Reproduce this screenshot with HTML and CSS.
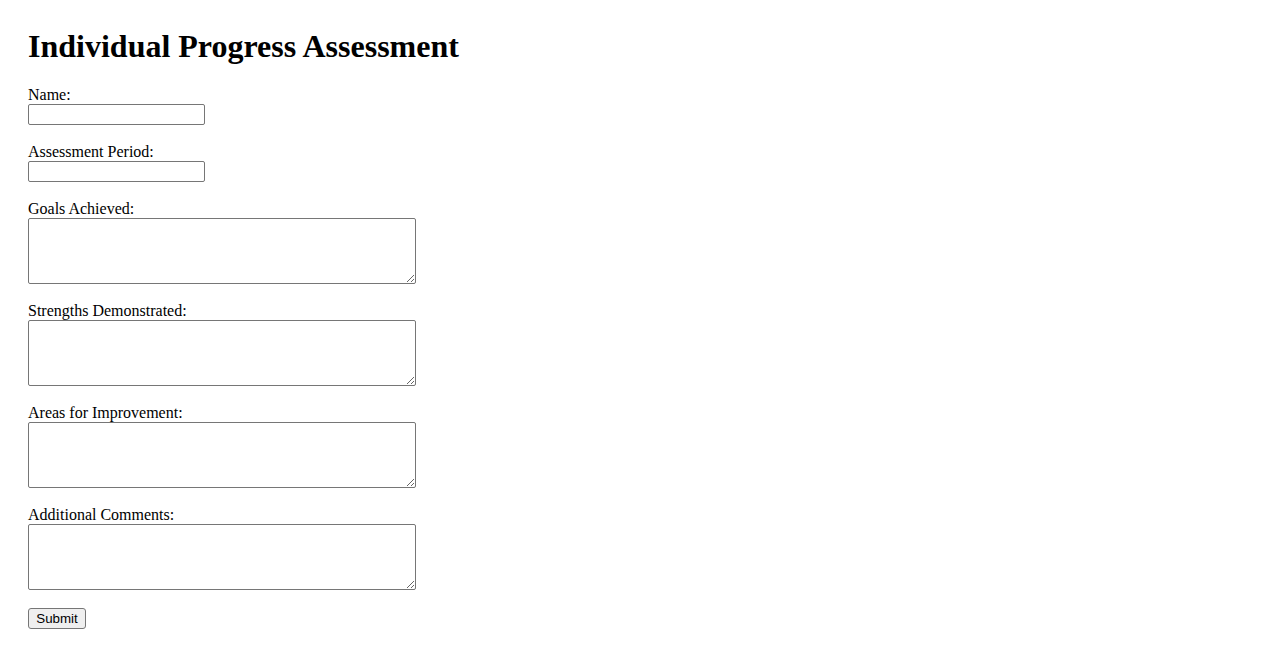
FILE: index.html
```html
<!DOCTYPE html>
<html lang="en">
<head>
<meta charset="utf-8">
<title>Individual Progress Assessment</title>
<link rel="stylesheet" href="styles.css">
</head>
<body>
<div class="page">
  <h1 class="title">Individual Progress Assessment</h1>
  <form class="form">
    <div class="group">
      <label class="label" for="name">Name:</label>
      <input class="field" type="text" id="name">
    </div>
    <div class="group">
      <label class="label" for="period">Assessment Period:</label>
      <input class="field" type="text" id="period">
    </div>
    <div class="group">
      <label class="label" for="goals">Goals Achieved:</label>
      <textarea class="area" id="goals" rows="4"></textarea>
    </div>
    <div class="group">
      <label class="label" for="strengths">Strengths Demonstrated:</label>
      <textarea class="area" id="strengths" rows="4"></textarea>
    </div>
    <div class="group">
      <label class="label" for="improve">Areas for Improvement:</label>
      <textarea class="area" id="improve" rows="4"></textarea>
    </div>
    <div class="group">
      <label class="label" for="comments">Additional Comments:</label>
      <textarea class="area" id="comments" rows="4"></textarea>
    </div>
    <button class="submit" type="submit">Submit</button>
  </form>
</div>
</body>
</html>
```

FILE: styles.css
```css
html, body {
  background: #ffffff;
}
body {
  margin: 8px;
  font-family: "Liberation Serif", "Times New Roman", serif;
  font-size: 16px;
  color: #000000;
}
.page {
  padding: 20px;
}
.title {
  margin: 0 0 21.44px 0;
  font-size: 32px;
  font-weight: bold;
  line-height: normal;
}
.form {
  margin: 0;
}
.group {
  margin-bottom: 18px;
}
.label {
  display: block;
  height: 18px;
  line-height: 18px;
}
.field {
  display: block;
  box-sizing: border-box;
  width: 177px;
  height: 21px;
  margin: 0;
  padding: 1px 2px;
  border: 1px solid #767676;
  border-radius: 2px;
  font-family: "Liberation Sans", Arial, sans-serif;
  font-size: 13.333px;
  background: #ffffff;
}
.area {
  display: block;
  box-sizing: border-box;
  width: 388px;
  height: 66px;
  margin: 0;
  padding: 2px;
  border: 1px solid #767676;
  border-radius: 2px;
  font-family: "Liberation Mono", "Courier New", monospace;
  font-size: 13.333px;
  background: #ffffff;
}
.submit {
  display: block;
  box-sizing: border-box;
  width: 58px;
  height: 21px;
  margin: 0;
  padding: 1px 6px;
  border: 1px solid #767676;
  border-radius: 3px;
  background: #efefef;
  color: #000000;
  font-family: "Liberation Sans", Arial, sans-serif;
  font-size: 13.333px;
  line-height: normal;
}
```
